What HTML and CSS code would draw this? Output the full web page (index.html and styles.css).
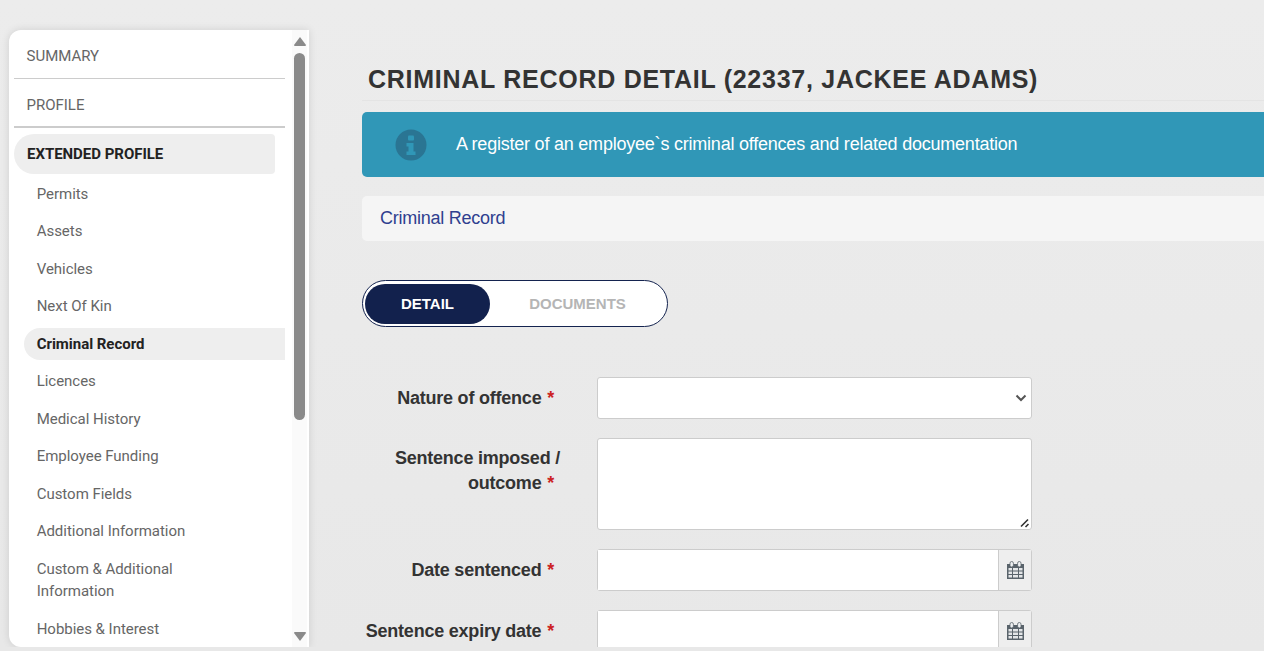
FILE: index.html
```html
<!DOCTYPE html>
<html lang="en">
<head>
    <meta charset="UTF-8">
    <meta name="viewport" content="width=device-width, initial-scale=1.0">
    <title>Criminal Record Detail</title>
    <link rel="stylesheet" href="styles.css">
</head>
<body>
    <div class="layout">
        <aside class="sidebar">
            <nav class="side-nav">
                <a class="top-link">SUMMARY</a>
                <a class="top-link top-link-heavy">PROFILE</a>
                <a class="section-link">EXTENDED PROFILE</a>
                <ul class="sub-list">
                    <li>Permits</li>
                    <li>Assets</li>
                    <li>Vehicles</li>
                    <li>Next Of Kin</li>
                    <li class="active">Criminal Record</li>
                    <li>Licences</li>
                    <li>Medical History</li>
                    <li>Employee Funding</li>
                    <li>Custom Fields</li>
                    <li>Additional Information</li>
                    <li class="two-line">Custom &amp; Additional Information</li>
                    <li>Hobbies &amp; Interest</li>
                </ul>
            </nav>
            <div class="scrollbar">
                <svg class="scroll-arrow" width="12" height="10" viewBox="0 0 12 10"><path d="M6 1 L12 9 Q12 10 11 10 H1 Q0 10 0 9 Z" fill="#8a8a8a"/></svg>
                <div class="scroll-thumb"></div>
                <svg class="scroll-arrow scroll-arrow-down" width="12" height="10" viewBox="0 0 12 10"><path d="M6 9 L12 1 Q12 0 11 0 H1 Q0 0 0 1 Z" fill="#8a8a8a"/></svg>
            </div>
        </aside>

        <main class="content">
            <h1 class="page-title">CRIMINAL RECORD DETAIL (22337, JACKEE ADAMS)</h1>
            <div class="info-banner">
                <svg class="info-icon" width="32" height="32" viewBox="0 0 32 32">
                    <circle cx="16" cy="16" r="15.5" fill="#2a7593"/>
                    <rect x="13" y="6.5" width="6" height="5" rx="1" fill="#3097b7"/>
                    <path d="M11.5 14 H18.5 V22.5 H20.5 V26 H11.5 V22.5 H13.5 V17.5 H11.5 Z" fill="#3097b7"/>
                </svg>
                <span>A register of an employee`s criminal offences and related documentation</span>
            </div>
            <div class="crumb">Criminal Record</div>

            <div class="tabs">
                <span class="tab tab-on">DETAIL</span>
                <span class="tab">DOCUMENTS</span>
            </div>

            <form class="record-form">
                <div class="form-row">
                    <label class="field-label">Nature of offence <em>*</em></label>
                    <div class="select-box">
                        <svg width="12" height="8" viewBox="0 0 12 8"><path d="M1.5 1.5 L6 6 L10.5 1.5" fill="none" stroke="#555" stroke-width="2"/></svg>
                    </div>
                </div>
                <div class="form-row form-row-tall">
                    <label class="field-label"><span class="label-over">Sentence imposed /</span> outcome <em>*</em></label>
                    <div class="text-wrap">
                        <textarea class="text-box"></textarea>
                        <svg class="grip" width="10" height="10" viewBox="0 0 10 10"><path d="M1 8.5 L8 1.5 M5.5 9 L8.5 6" fill="none" stroke="#333" stroke-width="1.6"/></svg>
                    </div>
                </div>
                <div class="form-row">
                    <label class="field-label">Date sentenced <em>*</em></label>
                    <div class="date-box">
                        <input class="date-input" type="text">
                        <span class="date-btn">
                            <svg width="17" height="18" viewBox="0 0 17 18"><path d="M0 3 H17 V18 H0 Z" fill="#59636b"/><path d="M1.5 7 H5 V9.5 H1.5 Z M6 7 H11 V9.5 H6 Z M12 7 H15.5 V9.5 H12 Z M1.5 10.5 H5 V13 H1.5 Z M6 10.5 H11 V13 H6 Z M12 10.5 H15.5 V13 H12 Z M1.5 14 H5 V16.5 H1.5 Z M6 14 H11 V16.5 H6 Z M12 14 H15.5 V16.5 H12 Z" fill="#e4e6e8"/><rect x="3" y="0.5" width="3.4" height="5.5" rx="1.7" fill="#eef0f2" stroke="#59636b" stroke-width=".8"/><rect x="10.6" y="0.5" width="3.4" height="5.5" rx="1.7" fill="#eef0f2" stroke="#59636b" stroke-width=".8"/></svg>
                        </span>
                    </div>
                </div>
                <div class="form-row">
                    <label class="field-label">Sentence expiry date <em>*</em></label>
                    <div class="date-box">
                        <input class="date-input" type="text">
                        <span class="date-btn">
                            <svg width="17" height="18" viewBox="0 0 17 18"><path d="M0 3 H17 V18 H0 Z" fill="#59636b"/><path d="M1.5 7 H5 V9.5 H1.5 Z M6 7 H11 V9.5 H6 Z M12 7 H15.5 V9.5 H12 Z M1.5 10.5 H5 V13 H1.5 Z M6 10.5 H11 V13 H6 Z M12 10.5 H15.5 V13 H12 Z M1.5 14 H5 V16.5 H1.5 Z M6 14 H11 V16.5 H6 Z M12 14 H15.5 V16.5 H12 Z" fill="#e4e6e8"/><rect x="3" y="0.5" width="3.4" height="5.5" rx="1.7" fill="#eef0f2" stroke="#59636b" stroke-width=".8"/><rect x="10.6" y="0.5" width="3.4" height="5.5" rx="1.7" fill="#eef0f2" stroke="#59636b" stroke-width=".8"/></svg>
                        </span>
                    </div>
                </div>
            </form>
        </main>
    </div>
</body>
</html>
```

FILE: styles.css
```css
html, body {
    margin: 0;
    height: 100%;
    overflow: hidden;
}

body {
    background: linear-gradient(#ececec, #e8e8e8);
    color: #333333;
    font-family: "Liberation Sans", Arial, sans-serif;
}

.layout {
    display: flex;
    height: 647px;
    overflow: hidden;
}

/* left menu */
.sidebar {
    display: flex;
    flex: none;
    width: 300px;
    height: 617px;
    margin: 30px 0 0 9px;
    background-color: #ffffff;
    border-radius: 12px 0 0 12px;
    box-shadow: 0 0 8px rgba(0, 0, 0, 0.12);
    overflow: hidden;
    font-family: Roboto, sans-serif;
    font-size: 15px;
    letter-spacing: -0.03px;
    color: #666666;
}

.side-nav {
    flex: none;
    width: 271px;
    padding-left: 5px;
}

.top-link {
    display: block;
    height: 48px;
    line-height: 52px;
    padding-left: 12.6px;
    border-bottom: 1px solid #cccccc;
}

.top-link-heavy {
    height: 47px;
    border-bottom-width: 2px;
}

.section-link {
    display: block;
    width: 248px;
    height: 40px;
    line-height: 40px;
    margin-top: 6px;
    padding-left: 13px;
    background-color: #eeeeee;
    border-radius: 20px 4px 4px 20px;
    font-weight: 700;
    color: #222222;
}

.sub-list {
    list-style: none;
    margin: 0.75px 0 0 10px;
    padding: 0;
}

.sub-list li {
    height: 37.5px;
    line-height: 38px;
    padding-left: 12.7px;
}

.sub-list li.active {
    height: 32px;
    line-height: 32px;
    margin: 2.75px 0;
    background-color: #eeeeee;
    border-radius: 16px 0 0 16px;
    font-weight: 700;
    color: #222222;
}

.sub-list li.two-line {
    height: auto;
    line-height: 22px;
    width: 170px;
    padding-top: 8px;
    padding-bottom: 8px;
}

.scrollbar {
    display: flex;
    flex-direction: column;
    align-items: center;
    flex: none;
    width: 15px;
    margin-left: 7px;
    background-color: #fafafa;
}

.scroll-arrow {
    flex: none;
    margin-top: 6px;
}

.scroll-arrow-down {
    margin-top: 212px;
}

.scroll-thumb {
    flex: none;
    width: 11px;
    height: 367px;
    margin-top: 7px;
    background-color: #8a8a8a;
    border-radius: 6px;
}

/* main column */
.content {
    flex: 1;
    min-width: 0;
    padding: 0 0 0 53px;
}

.page-title {
    margin: 64px 0 0;
    padding: 0 0 5px 6px;
    height: 31px;
    line-height: 31px;
    border-bottom: 1px solid #e4e4e4;
    font-size: 25px;
    letter-spacing: 0.73px;
    font-weight: 700;
    white-space: nowrap;
    color: #333333;
}

.info-banner {
    display: flex;
    align-items: center;
    height: 65px;
    margin-top: 11px;
    margin-right: -10px;
    padding-left: 33px;
    background-color: #3097b7;
    border-radius: 5px;
    font-size: 18px;
    letter-spacing: -0.22px;
    color: #ffffff;
}

.info-banner span {
    margin-left: 29px;
}

.crumb {
    height: 45px;
    line-height: 45px;
    margin-top: 19px;
    margin-right: -10px;
    padding-left: 18px;
    background-color: #f5f5f5;
    border-radius: 5px;
    font-size: 18px;
    letter-spacing: -0.25px;
    color: #2f3f8f;
}

.tabs {
    display: flex;
    align-items: center;
    box-sizing: border-box;
    width: 306px;
    height: 47px;
    margin-top: 39px;
    padding: 0 2px;
    background-color: #ffffff;
    border: 1px solid #14234f;
    border-radius: 24px;
}

.tab {
    width: 125px;
    height: 40px;
    line-height: 40px;
    text-align: center;
    border-radius: 20px;
    font-size: 15px;
    font-weight: 700;
    color: #b5b5b5;
}

.tab + .tab {
    margin-left: 25px;
}

.tab-on {
    background-color: #12214d;
    color: #ffffff;
}

/* form */
.record-form {
    margin-top: 50px;
}

.form-row {
    display: flex;
    align-items: center;
    margin-bottom: 19px;
}

.form-row-tall {
    align-items: flex-start;
}

.field-label {
    flex: none;
    box-sizing: border-box;
    width: 235px;
    padding-right: 43px;
    text-align: right;
    white-space: nowrap;
    font-size: 18px;
    letter-spacing: -0.22px;
    line-height: 25px;
    font-weight: 700;
    color: #333333;
}

.form-row-tall .field-label {
    padding-top: 8px;
}

.label-over {
    display: block;
    margin-right: -6px;
}

.field-label em {
    font-style: normal;
    color: #cc2222;
    margin-left: 1px;
}

.select-box {
    display: flex;
    align-items: center;
    justify-content: flex-end;
    box-sizing: border-box;
    width: 435px;
    height: 42px;
    padding-right: 4px;
    background-color: #ffffff;
    border: 1px solid #cccccc;
    border-radius: 3px;
}

.text-wrap {
    position: relative;
    width: 435px;
    height: 92px;
}

.text-box {
    display: block;
    box-sizing: border-box;
    width: 100%;
    height: 100%;
    margin: 0;
    resize: none;
    background-color: #ffffff;
    border: 1px solid #cccccc;
    border-radius: 3px;
}

.grip {
    position: absolute;
    right: 2px;
    bottom: 2px;
}

.date-box {
    display: flex;
    box-sizing: border-box;
    width: 435px;
    height: 42px;
    border: 1px solid #cccccc;
    border-radius: 3px;
}

.date-input {
    flex: 1;
    min-width: 0;
    padding: 0;
    border: 0;
    background-color: #ffffff;
}

.date-btn {
    display: flex;
    align-items: center;
    justify-content: center;
    flex: none;
    width: 32px;
    border-left: 1px solid #cccccc;
    background-color: #eeeeee;
}
```
